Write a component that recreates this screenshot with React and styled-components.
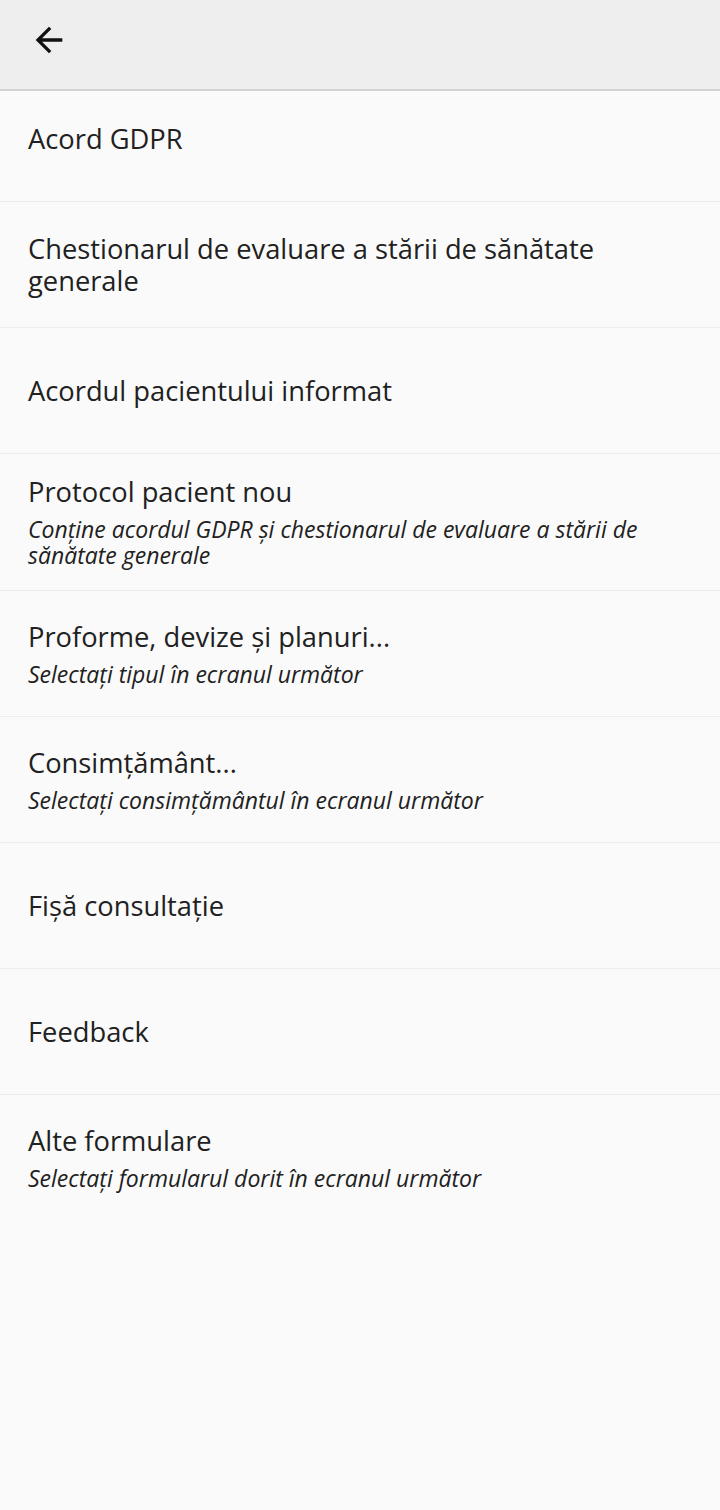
import React from 'react'
import styled, { createGlobalStyle } from 'styled-components'

const GlobalStyle = createGlobalStyle`
   html, body {
      margin: 0;
      padding: 0;
      background: #fafafa;
   }
   body {
      font-family: 'Open Sans', 'Noto Sans', sans-serif;
      color: #212121;
      -webkit-font-smoothing: antialiased;
   }
`

const forms = [
   { title: 'Acord GDPR' },
   { title: 'Chestionarul de evaluare a stării de sănătate generale' },
   { title: 'Acordul pacientului informat' },
   { title: 'Protocol pacient nou', subtitle: 'Conține acordul GDPR și chestionarul de evaluare a stării de sănătate generale' },
   { title: 'Proforme, devize și planuri...', subtitle: 'Selectați tipul în ecranul următor' },
   { title: 'Consimțământ...', subtitle: 'Selectați consimțământul în ecranul următor' },
   { title: 'Fișă consultație' },
   { title: 'Feedback' },
   { title: 'Alte formulare', subtitle: 'Selectați formularul dorit în ecranul următor' }
]

const BackIcon = () => (
   <svg width="40" height="40" viewBox="0 0 24 24" aria-hidden="true">
      <path d="M20 11H7.83l5.59-5.59L12 4l-8 8 8 8 1.41-1.41L7.83 13H20v-2z" fill="#111" />
   </svg>
)

const App = () => (
   <Page>
      <GlobalStyle />
      <AppBar>
         <BackButton type="button" aria-label="Înapoi">
            <BackIcon />
         </BackButton>
      </AppBar>
      <List>
         {forms.map((form, i) => (
            <Row key={form.title} last={i === forms.length - 1 ? 1 : 0}>
               <Title>{form.title}</Title>
               {!!form.subtitle && <Subtitle>{form.subtitle}</Subtitle>}
            </Row>
         ))}
      </List>
   </Page>
)

export default App

const Page = styled.div`
   min-height: 1510px;
   background: #fafafa;
`

// the list slides a bit under the app bar, like a scrolled view
const AppBar = styled.header`
   position: relative;
   z-index: 1;
   height: 91px;
   box-sizing: border-box;
   display: flex;
   align-items: center;
   padding: 0 0 9px 29px;
   background: #eeeeee;
   border-bottom: 2px solid #d2d2d2;
`

const BackButton = styled.button`
   display: flex;
   align-items: center;
   justify-content: center;
   padding: 0;
   border: none;
   background: transparent;
   cursor: pointer;
`

const List = styled.div`
   margin-top: -15px;
`

const Row = styled.div`
   min-height: 126px;
   box-sizing: border-box;
   display: flex;
   flex-direction: column;
   justify-content: center;
   padding: 22px 28px;
   border-bottom: ${({ last }) => (last ? 'none' : '1px solid #ededed')};
`

const Title = styled.div`
   font-size: 27.3px;
   line-height: 32px;
`

const Subtitle = styled.div`
   margin-top: 8px;
   font-size: 23px;
   line-height: 26px;
   font-style: italic;
`
